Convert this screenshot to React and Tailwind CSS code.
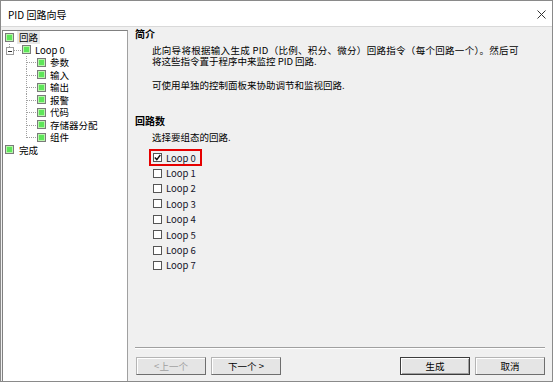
import React from "react";

const Green = () => (
  <span className="w-[9px] h-[9px] border border-[#7a7a7a] bg-[#b8f5ac] flex items-center justify-center shrink-0">
    <span className="w-[5px] h-[5px] bg-[#5ee65a]" />
  </span>
);

const ChildLines = ({ last }) => (
  <svg width="34" height="12.5" className="shrink-0" shapeRendering="crispEdges">
    <line x1="23.5" y1="0" x2="23.5" y2={last ? 6.5 : 12.5} stroke="#a0a0a0" strokeDasharray="1 1" />
    <line x1="24" y1="6.5" x2="34" y2="6.5" stroke="#a0a0a0" strokeDasharray="1 1" />
  </svg>
);

const children = ["参数", "输入", "输出", "报警", "代码", "存储器分配", "组件"];
const loops = [0, 1, 2, 3, 4, 5, 6, 7];

const Btn = ({ children, disabled, def, w = "w-[70px]" }) => (
  <div
    className={
      "h-[18px] flex items-center justify-center bg-[#e5e5e5] border " +
      w +
      " " +
      (def
        ? "border-[#3c3c3c] shadow-[inset_1px_1px_0_#fff,inset_-1px_-1px_0_#a0a0a0]"
        : "border-[#b4b4b4] border-r-[#6e6e6e] border-b-[#6e6e6e] shadow-[inset_1px_1px_0_#fff]") +
      (disabled ? " text-[#a0a0a0]" : " text-black")
    }
  >
    {children}
  </div>
);

export default function App() {
  return (
    <div className="w-[553px] h-[388px] bg-white font-['Noto_Sans_CJK_SC','Liberation_Sans',sans-serif] text-[9.5px] text-black">
      <div className="w-[553px] h-[382px] border border-[#8a8a8a] flex flex-col">
        <div className="h-[26px] shrink-0 bg-white border-b border-[#d9d9d9] flex items-center pl-[7px] pr-[6px]">
          <span className="text-[10px] leading-[12px] mt-[2px]">PID 回路向导</span>
          <svg width="9" height="9" className="ml-auto mt-[1px]">
            <path d="M0.5 0.5 L8.5 8.5 M8.5 0.5 L0.5 8.5" stroke="#333" strokeWidth="1" />
          </svg>
        </div>
        <div className="flex-1 flex bg-[#f0f0f0] pl-[1px] pt-[3px] min-h-0">
          <div className="w-[126px] shrink-0 bg-white border border-b-0 border-[#a0a0a0] border-l-[#808080] border-t-[#808080] leading-[12.5px]">
            <div className="h-[12.5px] flex items-center pl-[2px]">
              <Green />
              <span className="ml-[3px] px-[2px] bg-[#e8e8e8]">回路</span>
            </div>
            <div className="h-[12.5px] flex items-center">
              <svg width="19" height="12.5" className="shrink-0" shapeRendering="crispEdges">
                <line x1="6.5" y1="0" x2="6.5" y2="3" stroke="#a0a0a0" strokeDasharray="1 1" />
                <rect x="3.5" y="3.5" width="7" height="7" fill="white" stroke="#9a9a9a" />
                <line x1="5" y1="7" x2="9" y2="7" stroke="#333" />
                <line x1="11" y1="6.5" x2="19" y2="6.5" stroke="#a0a0a0" strokeDasharray="1 1" />
              </svg>
              <Green />
              <span className="ml-[4px]">Loop 0</span>
            </div>
            {children.map((c, i) => (
              <div key={c} className="h-[12.5px] flex items-center">
                <ChildLines last={i === children.length - 1} />
                <Green />
                <span className="ml-[4px]">{c}</span>
              </div>
            ))}
            <div className="h-[12.5px] flex items-center pl-[2px]">
              <Green />
              <span className="ml-[5px]">完成</span>
            </div>
          </div>
          <div className="flex-1 flex flex-col pl-[7px] pr-[7px] -mt-[3px] pb-[6px]">
            <div className="font-bold text-[10px] leading-[12px] mt-[1px]">简介</div>
            <div className="mt-[5px] pl-[17px] leading-[11px]">
              <div className="tracking-[0.3px]">此向导将根据输入生成 PID（比例、积分、微分）回路指令（每个回路一个）。然后可</div>
              <div>将这些指令置于程序中来监控 PID 回路.</div>
            </div>
            <div className="mt-[13px] pl-[17px] leading-[11px]">可使用单独的控制面板来协助调节和监视回路.</div>
            <div className="mt-[24px] font-bold text-[10px] leading-[12px]">回路数</div>
            <div className="mt-[5px] pl-[17px] leading-[11px]">选择要组态的回路.</div>
            <div className="mt-[7px] pl-[18px] flex flex-col">
              {loops.map((n) => (
                <div key={n} className="relative h-[15.4px] flex items-center">
                  <span className="w-[9px] h-[9px] border border-[#555] bg-white flex items-center justify-center shrink-0">
                    {n === 0 && (
                      <svg width="7" height="7">
                        <path d="M0.8 3.6 L2.8 5.6 L6.3 1" stroke="#111" strokeWidth="1.4" fill="none" />
                      </svg>
                    )}
                  </span>
                  <span className="ml-[4px] text-[#15152a]">Loop {n}</span>
                  {n === 0 && (
                    <div className="absolute left-[-4px] top-[-1px] w-[53px] h-[17px] border-2 border-[#e60000]" />
                  )}
                </div>
              ))}
            </div>
            <div className="mt-auto border-t border-[#a0a0a0] shadow-[0_1px_0_#fff]" />
            <div className="mt-[9px] flex pl-[1px]">
              <Btn disabled>&lt;上一个</Btn>
              <div className="ml-[5px]">
                <Btn>下一个 &gt;</Btn>
              </div>
              <div className="ml-auto">
                <Btn def>生成</Btn>
              </div>
              <div className="ml-[5px]">
                <Btn>取消</Btn>
              </div>
            </div>
          </div>
        </div>
      </div>
    </div>
  );
}
